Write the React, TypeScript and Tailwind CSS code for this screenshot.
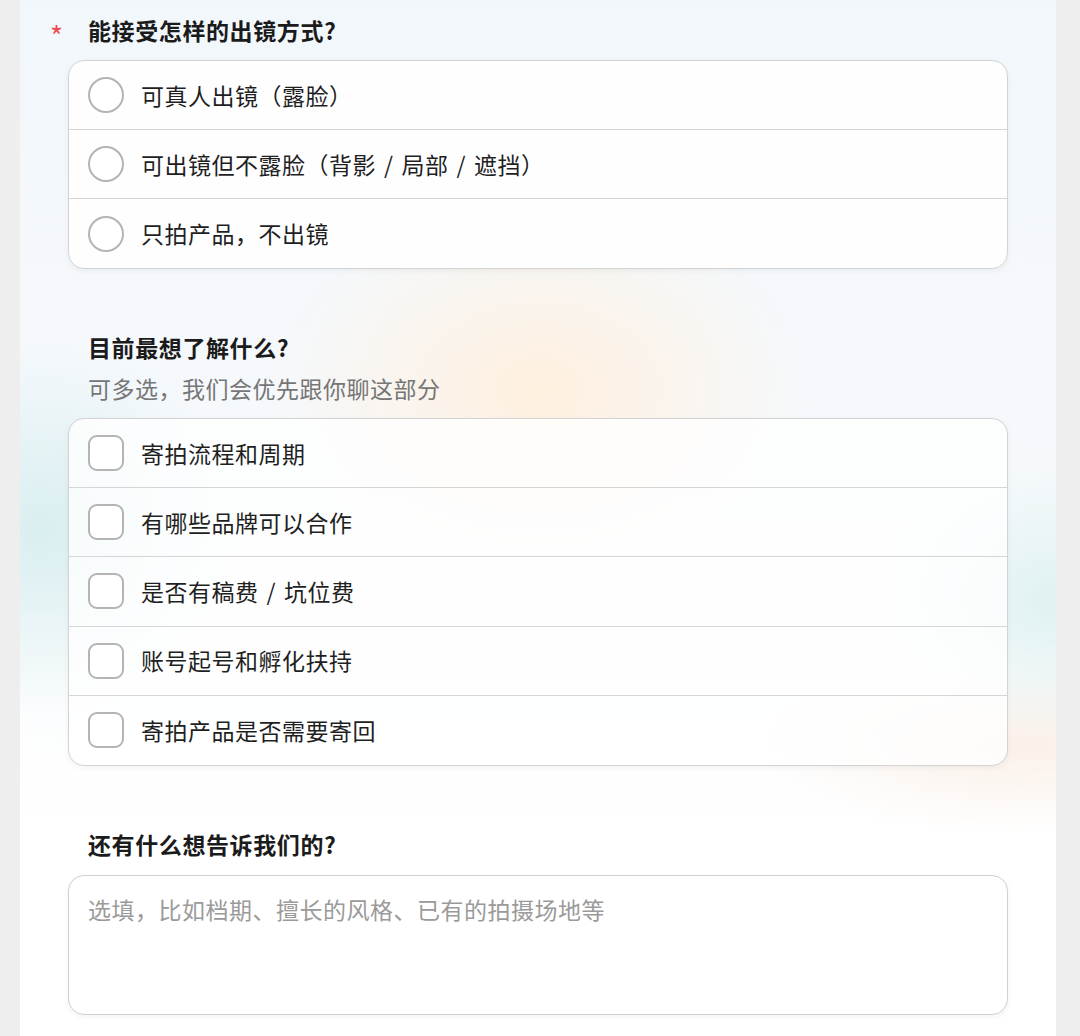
import React from 'react';

const faceOptions = ['可真人出镜（露脸）', '可出镜但不露脸（背影 / 局部 / 遮挡）', '只拍产品，不出镜'];

const topicOptions = ['寄拍流程和周期', '有哪些品牌可以合作', '是否有稿费 / 坑位费', '账号起号和孵化扶持', '寄拍产品是否需要寄回'];

const font = { fontFamily: '"Noto Sans CJK SC", "Noto Sans", sans-serif' };

// the slashes in the reference sit in wider gaps than a plain space gives
const OptionText: React.FC<{ text: string }> = ({ text }) => {
  const parts = text.split(' / ');
  return (
    <span className="text-[23px] tracking-[0.5px] text-[#1f1f1f]">
      {parts.map((p, i) => (
        <React.Fragment key={i}>
          {i > 0 && <span className="px-[8px]">/</span>}
          {p}
        </React.Fragment>
      ))}
    </span>
  );
};

const Title: React.FC<{ text: string; required?: boolean }> = ({ text, required }) => (
  <div className="relative pl-[20px] h-[30px] flex items-center text-[23px] leading-[30px] tracking-[0.6px] font-semibold text-[#1b1b1b]">
    {required && <span className="absolute left-[-18px] top-[5px] text-[28px] leading-[30px] text-[#f04a50] font-normal">*</span>}
    {text}
  </div>
);

export default function App() {
  return (
    <div className="w-full h-[1036px] overflow-hidden bg-[#eeeeee]" style={font}>
      <div className="ml-[20px] w-[1036px] h-full px-[48px] pt-[15px] bg-[image:radial-gradient(ellipse_270px_190px_at_520px_390px,#fff0df,transparent),radial-gradient(ellipse_200px_190px_at_20px_530px,#d9eef0,transparent),radial-gradient(ellipse_180px_140px_at_1036px_600px,#dff1f1,transparent),radial-gradient(ellipse_260px_90px_at_1000px_745px,#fbf0e8,transparent),linear-gradient(180deg,#f2f7fb_0%,#f6f9fc_45%,#ffffff_80%)]">
        <Title text="能接受怎样的出镜方式?" required />
        <div className="mt-[15px] rounded-[16px] border border-[#d3d3d3] overflow-hidden bg-white/90 shadow-[0_2px_6px_rgba(0,0,0,0.05)] divide-y divide-[#d6d6d6]">
          {faceOptions.map((o) => (
            <label key={o} className="h-[69px] flex items-center gap-[17px] px-[19px] cursor-pointer">
              <span className="w-[36px] h-[36px] rounded-full border-2 border-[#b4b4b4] bg-white shrink-0" />
              <OptionText text={o} />
            </label>
          ))}
        </div>

        <div className="mt-[63px]">
          <Title text="目前最想了解什么?" />
          <div className="mt-[11px] pl-[20px] h-[30px] leading-[30px] text-[23px] tracking-[0.5px] text-[#767676]">可多选，我们会优先跟你聊这部分</div>
        </div>
        <div className="mt-[15px] rounded-[16px] border border-[#d3d3d3] overflow-hidden bg-white/80 shadow-[0_2px_6px_rgba(0,0,0,0.05)] divide-y divide-[#d6d6d6]">
          {topicOptions.map((o) => (
            <label key={o} className="h-[69.2px] flex items-center gap-[17px] px-[19px] cursor-pointer">
              <span className="w-[36px] h-[36px] rounded-[9px] border-2 border-[#b4b4b4] bg-white shrink-0" />
              <OptionText text={o} />
            </label>
          ))}
        </div>

        <div className="mt-[63px]">
          <Title text="还有什么想告诉我们的?" />
        </div>
        <textarea
          className="mt-[16px] block w-full h-[140px] resize-none rounded-[16px] border border-[#d0d0d0] bg-white px-[19px] pt-[18px] text-[23px] leading-[30px] tracking-[0.5px] text-[#202020] placeholder:text-[#9a9a9a] outline-none shadow-[0_2px_6px_rgba(0,0,0,0.05)]"
          style={font}
          placeholder="选填，比如档期、擅长的风格、已有的拍摄场地等"
        />
      </div>
    </div>
  );
}
